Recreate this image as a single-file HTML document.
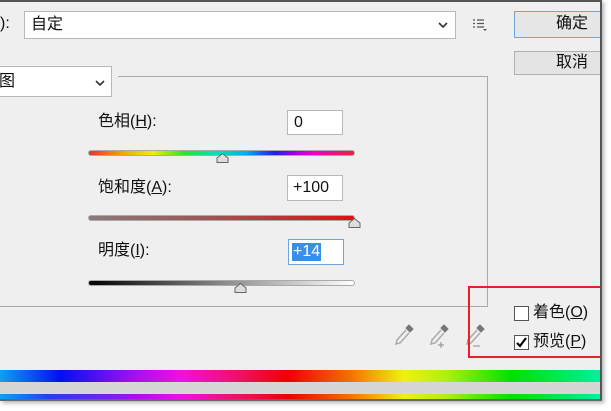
<!DOCTYPE html>
<html><head><meta charset="utf-8"><style>
*{margin:0;padding:0;box-sizing:border-box}
body{width:611px;height:411px;background:#fff;position:relative;overflow:hidden;font-family:"Liberation Sans","Noto Sans CJK SC",sans-serif;font-size:14px;color:#111;line-height:18px}
#dlg{position:absolute;left:0;top:0;width:602px;height:401px;background:#efefef;border-top:2px solid #555;border-right:2px solid #555;border-bottom:2px solid #666;box-shadow:2px 2px 4px rgba(0,0,0,.3);overflow:hidden}
.a{position:absolute}
.inp{background:#fff;border:1px solid #b8b8b8}
.lbl{font-size:16px}
u{text-decoration:underline}
.sl{position:absolute;height:6px;border-radius:3px;border:1px solid #aaa}
.th{position:absolute;width:13px;height:10px}
</style></head><body>
<div id="dlg">
<div class="a lbl" style="left:0;top:13px">):</div>
<div class="a inp" style="left:24px;top:9px;width:432px;height:28px"><span class="a" style="left:6px;top:4px;font-size:16px">自定</span>
<svg class="a" style="left:413px;top:10px" width="10" height="7"><path d="M1 1L5 5L9 1" stroke="#333" stroke-width="1.6" fill="none"/></svg></div>
<svg class="a" style="left:472px;top:16px" width="16" height="14"><g stroke="#555" stroke-width="1.3"><path d="M1 2h2M5 2h7M1 5.5h2M5 5.5h7M1 9h2M5 9h7"/></g><path d="M11 11l2 2 2-2z" fill="#555"/></svg>
<div class="a" style="left:514px;top:9px;width:100px;height:27px;border:1px solid #6ea6d8;background:#e6e6e6"><span class="a lbl" style="left:41px;top:3px">确定</span></div>
<div class="a" style="left:514px;top:49px;width:100px;height:24px;border:1px solid #b0b0b0;background:#e4e4e4"><span class="a lbl" style="left:41px;top:2px">取消</span></div>
<div class="a inp" style="left:-2px;top:64px;width:114px;height:31px"><span class="a lbl" style="left:0;top:6px">图</span>
<svg class="a" style="left:96px;top:13px" width="10" height="7"><path d="M1 1L5 5L9 1" stroke="#333" stroke-width="1.6" fill="none"/></svg></div>
<div class="a" style="left:118px;top:74px;width:370px;height:1px;background:#aaa"></div>
<div class="a" style="left:487px;top:74px;width:1px;height:231px;background:#aaa"></div>
<div class="a" style="left:0;top:304px;width:488px;height:1px;background:#aaa"></div>

<div class="a lbl" style="left:98px;top:111px">色相(<u>H</u>):</div>
<div class="a inp" style="left:287px;top:108px;width:56px;height:25px"><span class="a" style="left:6px;top:3px;font-size:16px">0</span></div>
<div class="sl" style="left:88px;top:148px;width:267px;background:linear-gradient(90deg,#f03030,#f0a000,#f0f000,#30e030,#00e0c0 48%,#00b0f0,#2020e0 70%,#a000e0,#f000c0 85%,#f02040)"></div>
<svg class="th" style="left:216px;top:151px"><path d="M6.5 0.5L12 5V9.5H1V5Z" fill="#ddd" stroke="#666"/></svg>

<div class="a lbl" style="left:98px;top:177px">饱和度(<u>A</u>):</div>
<div class="a inp" style="left:287px;top:173px;width:56px;height:26px"><span class="a" style="left:5px;top:3px;font-size:16px">+100</span></div>
<div class="sl" style="left:88px;top:213px;width:267px;background:linear-gradient(90deg,#8a7a7a,#a05050 50%,#e01010)"></div>
<svg class="th" style="left:348px;top:216px"><path d="M6.5 0.5L12 5V9.5H1V5Z" fill="#ddd" stroke="#666"/></svg>

<div class="a lbl" style="left:98px;top:240px">明度(<u>I</u>):</div>
<div class="a inp" style="left:288px;top:237px;width:56px;height:26px;border-color:#6ea6d8"><span class="a" style="left:3px;top:3px;font-size:16px;background:#3a8ee6;color:#fff;padding:0 1px">+14</span></div>
<div class="sl" style="left:88px;top:278px;width:267px;background:linear-gradient(90deg,#000,#888 50%,#fff)"></div>
<svg class="th" style="left:234px;top:281px"><path d="M6.5 0.5L12 5V9.5H1V5Z" fill="#ddd" stroke="#666"/></svg>

<svg class="a" style="left:393px;top:320px" width="100" height="30"><g fill="#777" stroke="#777">
<path d="M16 3l4 4-3 3-4-4z"/><path d="M13 8L4 18l-1 4 4-1 9-10" fill="none" stroke="#aaa" stroke-width="1.5"/>
<path d="M51 3l4 4-3 3-4-4z"/><path d="M48 8l-9 10-1 4 4-1 9-10" fill="none" stroke="#aaa" stroke-width="1.5"/><path d="M45 23h6M48 20v6" stroke="#999" stroke-width="1.2" fill="none"/>
<path d="M87 3l4 4-3 3-4-4z"/><path d="M84 8l-9 10-1 4 4-1 9-10" fill="none" stroke="#aaa" stroke-width="1.5"/><path d="M80 24h7" stroke="#999" stroke-width="1.2" fill="none"/></g></svg>

<div class="a" style="left:514px;top:304px;width:15px;height:15px;border:1px solid #555;background:#fff"></div>
<div class="a lbl" style="left:533px;top:302px">着色(<u>O</u>)</div>
<div class="a" style="left:514px;top:333px;width:15px;height:15px;border:1px solid #555;background:#fff"><svg width="13" height="13" style="position:absolute;left:0;top:0"><path d="M2 7l3 3 6-8" stroke="#000" stroke-width="2.2" fill="none"/></svg></div>
<div class="a lbl" style="left:533px;top:331px">预览(<u>P</u>)</div>

<div class="a" style="left:0;top:368px;width:602px;height:12px;background:linear-gradient(90deg,#10a0f0 0%,#0010f0 10%,#a010f0 22%,#f010e0 30%,#f01060 40%,#f00000 48%,#f07000 58%,#f0f010 67%,#b0f010 74%,#00e000 85%,#00f0a0 100%)"></div>
<div class="a" style="left:0;top:380px;width:602px;height:12px;background:#d6d6d6"></div>
<div class="a" style="left:0;top:392px;width:602px;height:7px;background:linear-gradient(90deg,#10a0f0 0%,#2040f0 8%,#a010f0 22%,#f010e0 30%,#f01060 40%,#f00000 48%,#f07000 58%,#f0f010 67%,#b0f010 74%,#00e000 85%,#00f0a0 100%)"></div>
<div class="a" style="left:468px;top:284px;width:150px;height:72px;border:2px solid #e8202a"></div>
</div>
</body></html>
